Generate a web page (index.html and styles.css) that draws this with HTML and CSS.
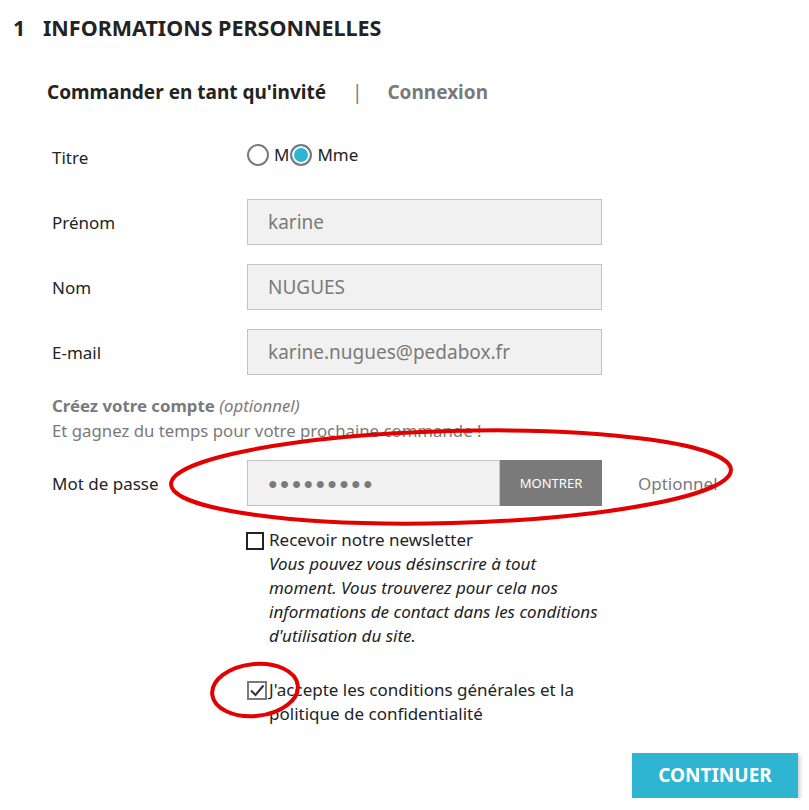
FILE: index.html
```html
<!DOCTYPE html>
<html>

<head>
    <title>commande</title>
    <link rel="stylesheet" href="styles.css">
</head>

<body>
    <section class="step">
        <h1><span class="step-num">1</span>INFORMATIONS PERSONNELLES</h1>

        <p class="tabs">
            <span class="tab-active">Commander en tant qu'invité</span>
            <span class="tab-sep">|</span>
            <span class="tab-link">Connexion</span>
        </p>

        <form class="form">
            <div class="row">
                <label class="label">Titre</label>
                <div class="radios">
                    <span class="radio"></span><span class="radio-text">M</span>
                    <span class="radio checked"></span><span class="radio-text">Mme</span>
                </div>
            </div>
            <div class="row">
                <label class="label">Prénom</label>
                <div class="input">karine</div>
            </div>
            <div class="row">
                <label class="label">Nom</label>
                <div class="input">NUGUES</div>
            </div>
            <div class="row">
                <label class="label">E-mail</label>
                <div class="input">karine.nugues@pedabox.fr</div>
            </div>

            <div class="account">
                <p><b>Créez votre compte</b> <i>(optionnel)</i></p>
                <p>Et gagnez du temps pour votre prochaine commande !</p>
            </div>

            <div class="row">
                <label class="label">Mot de passe</label>
                <div class="pass">
                    <div class="input pass-input">&#9679;&#9679;&#9679;&#9679;&#9679;&#9679;&#9679;&#9679;&#9679;</div>
                    <span class="btn-show">MONTRER</span>
                    <span class="optional">Optionnel</span>
                </div>
            </div>

            <div class="check newsletter">
                <span class="box"></span>
                <div class="check-text">
                    Recevoir notre newsletter<br>
                    <em>Vous pouvez vous désinscrire à tout moment. Vous trouverez pour cela nos informations de contact dans les conditions d'utilisation du site.</em>
                </div>
            </div>

            <div class="check terms">
                <span class="box box-checked">
                    <svg width="16" height="15" viewBox="0 0 16 15"><path d="M2 7.5 L6.5 12 L14.5 2.5" fill="none" stroke="#333" stroke-width="2"/></svg>
                </span>
                <div class="check-text">J'accepte les conditions générales et la politique de confidentialité</div>
            </div>
        </form>

        <div class="actions">
            <span class="btn-continue">CONTINUER</span>
        </div>
    </section>

    <!-- annotations au feutre rouge -->
    <svg class="marks" width="809" height="810" viewBox="0 0 809 810">
        <ellipse cx="451" cy="477" rx="280" ry="46" transform="rotate(-1.5 451 477)" fill="none" stroke="#e30000" stroke-width="4"/>
        <ellipse cx="255" cy="690" rx="43" ry="26" transform="rotate(-6 255 690)" fill="none" stroke="#e30000" stroke-width="4"/>
    </svg>
</body>

</html>
```

FILE: styles.css
```css
body {
    margin: 0;
    background: #fff;
    font-family: "Noto Sans", "Open Sans", sans-serif;
    color: #232323;
}

.step {
    padding: 16px 11px 0 13px;
}

h1 {
    margin: 0;
    font-size: 21.5px;
    line-height: 24px;
    font-weight: 700;
}

.step-num {
    display: inline-block;
    width: 30px;
}

.tabs {
    margin: 40px 0 0 34px;
    font-size: 19px;
    line-height: 24px;
    font-weight: 700;
}

.tab-sep {
    color: #7a7a7a;
    font-weight: 400;
    margin: 0 20px 0 21px;
}

.tab-link {
    color: #7a7a7a;
}

.form {
    margin: 30px 0 0 39px;
}

.row {
    display: grid;
    grid-template-columns: 195px auto;
    align-items: center;
    min-height: 46px;
    margin-bottom: 19px;
}

.label {
    font-size: 17px;
}

.radios {
    display: flex;
    align-items: center;
    height: 46px;
    margin-top: -5px;
}

.radio {
    box-sizing: border-box;
    width: 22px;
    height: 22px;
    border: 2px solid #7a7a7a;
    border-radius: 50%;
    background: #fff;
}

.radio.checked {
    background: #2fb5d2;
    box-shadow: inset 0 0 0 2px #fff;
}

.radio-text {
    font-size: 17px;
    margin: 0 1px 0 5px;
}

.input {
    box-sizing: border-box;
    width: 355px;
    height: 46px;
    padding: 0 20px;
    background: #f1f1f1;
    border: 1px solid #c2c2c2;
    font-size: 19px;
    line-height: 44px;
    color: #7a7a7a;
}

.account {
    margin: -1px 0 17px 0;
    font-size: 16.8px;
    line-height: 25px;
    color: #7a7a7a;
}

.account p {
    margin: 0;
}

.pass {
    display: flex;
    align-items: center;
}

.pass-input {
    width: 253px;
    font-size: 16px;
    letter-spacing: 2.2px;
}

.btn-show {
    width: 102px;
    height: 46px;
    line-height: 46px;
    text-align: center;
    background: #7a7a7a;
    color: #fff;
    font-size: 13px;
}

.optional {
    margin-left: 36px;
    font-size: 17px;
    color: #7a7a7a;
}

.check {
    display: flex;
    align-items: flex-start;
    margin-left: 194px;
}

.newsletter {
    margin-top: 22px;
}

.terms {
    margin-top: 30px;
}

.box {
    box-sizing: border-box;
    flex: none;
    width: 18px;
    height: 18px;
    margin: 4px 5px 0 0;
    border: 2px solid #232323;
}

.box-checked {
    width: 20px;
    height: 19px;
    margin: 3px 2px 0 1px;
    border-color: #7a7a7a;
    display: flex;
    align-items: center;
    justify-content: center;
}

.check-text {
    width: 330px;
    font-size: 17px;
    line-height: 24px;
}

.check-text em {
    font-size: 17px;
}

.actions {
    display: flex;
    justify-content: flex-end;
    margin-top: 27px;
}

.btn-continue {
    width: 166px;
    height: 45px;
    line-height: 45px;
    text-align: center;
    background: #2fb5d2;
    color: #fff;
    font-size: 19px;
    font-weight: 700;
    box-shadow: 2px 2px 4px rgba(0, 0, 0, 0.2);
}

.marks {
    position: absolute;
    left: 0;
    top: 0;
    pointer-events: none;
}
```
